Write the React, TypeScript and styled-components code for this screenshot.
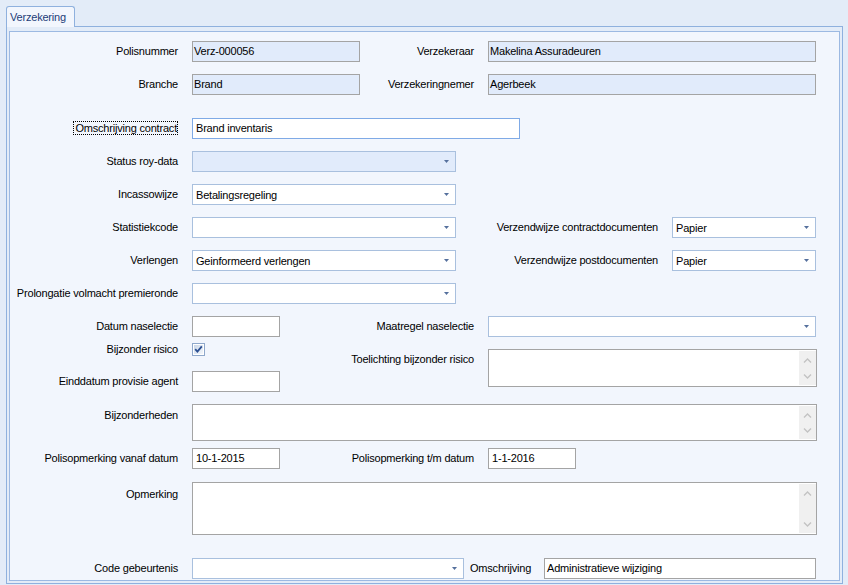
import React from "react";
import styled, { createGlobalStyle } from "styled-components";

const GlobalStyle = createGlobalStyle`
  html, body {
    margin: 0;
    padding: 0;
  }
  body {
    background: #e3ecf8;
    font-family: "Liberation Sans", Arial, sans-serif;
    font-size: 11px;
    letter-spacing: -0.2px;
    color: #000;
  }
`;

const Screen = styled.div`
  width: 848px;
  height: 585px;
  padding: 6px 0 0 6px;
  box-sizing: border-box;
  overflow: hidden;
`;

const TabStrip = styled.div`
  display: flex;
  position: relative;
  z-index: 1;
  margin-bottom: -1px;
`;

const Tab = styled.div`
  width: 69px;
  height: 21px;
  box-sizing: border-box;
  border: 1px solid #8fb1de;
  border-bottom: none;
  border-radius: 3px 3px 0 0;
  background: #f2f6fd;
  color: #1d3d78;
  padding: 3px 0 0 3px;
  line-height: 14px;
`;

const TabPanel = styled.div`
  width: 837px;
  box-sizing: border-box;
  border: 1px solid #8fb1de;
  background: #e3ecf8;
  padding: 4px 2px 2px 2px;
`;

const Group = styled.div`
  border: 1px solid #9cb9e2;
  background: #f2f6fd;
  padding: 9px 22px 1px 0;
  display: flex;
  flex-direction: column;
`;

const Row = styled.div<{ $top?: number; $gap?: number; $align?: string }>`
  display: flex;
  align-items: ${(p) => p.$align || "center"};
  gap: ${(p) => p.$gap ?? 12}px;
  margin-top: ${(p) => p.$top || 0}px;
`;

const Column = styled.div<{ $w?: number }>`
  display: flex;
  flex-direction: column;
  ${(p) => (p.$w ? `width: ${p.$w}px;` : "flex: 1;")}
`;

const Label = styled.div<{ $w: number; $left?: boolean; $pad?: number; $padR?: number }>`
  width: ${(p) => p.$w}px;
  flex: none;
  box-sizing: border-box;
  text-align: ${(p) => (p.$left ? "left" : "right")};
  padding-right: ${(p) => p.$padR ?? 2}px;
  padding-top: ${(p) => p.$pad || 0}px;
  white-space: nowrap;
  line-height: 13px;
`;

const FocusText = styled.span`
  border: 1px dotted #000;
  padding: 0 0 0 1px;
`;

const TextBox = styled.div<{ $w: number; $kind?: "readonly" | "plain" | "focus"; $pad?: number }>`
  width: ${(p) => p.$w}px;
  height: 21px;
  flex: none;
  box-sizing: border-box;
  border: 1px solid ${(p) => (p.$kind === "focus" ? "#7faae6" : "#a4a4a4")};
  background: ${(p) => (p.$kind === "readonly" ? "#e1ebfb" : "#fff")};
  padding-left: ${(p) => p.$pad ?? 2}px;
  line-height: 18px;
  white-space: nowrap;
  overflow: hidden;
`;

const ComboBox = styled.div<{ $w: number; $disabled?: boolean }>`
  width: ${(p) => p.$w}px;
  height: 21px;
  flex: none;
  box-sizing: border-box;
  border: 1px solid #a9c0de;
  background: ${(p) => (p.$disabled ? "#e1ebfb" : "#fff")};
  display: flex;
  align-items: center;
  padding: 0 6px 0 3px;
`;

const ComboValue = styled.span`
  flex: 1;
  white-space: nowrap;
  overflow: hidden;
`;

const Memo = styled.div<{ $h: number }>`
  flex: 1;
  height: ${(p) => p.$h}px;
  box-sizing: border-box;
  border: 1px solid #a4a4a4;
  background: #fff;
  display: flex;
  justify-content: flex-end;
  padding: 1px 0;
`;

const ScrollTrack = styled.div`
  width: 17px;
  background: #f0f0f0;
  display: flex;
  flex-direction: column;
  justify-content: space-between;
  align-items: center;
  padding: 7px 0 6px 0;
  box-sizing: border-box;
`;

const CheckWrap = styled.div`
  width: 13px;
  height: 13px;
  flex: none;
  display: flex;
`;

const Arrow = () => (
  <svg width="5" height="3" viewBox="0 0 5 3">
    <path d="M0 0H5L2.5 3Z" fill="#55709d" />
  </svg>
);

const Chevron = ({ up }: { up?: boolean }) => (
  <svg width="9" height="5" viewBox="0 0 9 5">
    <path
      d={up ? "M1 4.5L4.5 1L8 4.5" : "M1 0.5L4.5 4L8 0.5"}
      fill="none"
      stroke="#c3c3c3"
      strokeWidth="1.4"
    />
  </svg>
);

const Combo = ({ w, value, disabled }: { w: number; value?: string; disabled?: boolean }) => (
  <ComboBox $w={w} $disabled={disabled}>
    <ComboValue>{value}</ComboValue>
    <Arrow />
  </ComboBox>
);

const MemoBox = ({ h }: { h: number }) => (
  <Memo $h={h}>
    <ScrollTrack>
      <Chevron up />
      <Chevron />
    </ScrollTrack>
  </Memo>
);

const CheckBox = () => (
  <CheckWrap>
    <svg width="13" height="13" viewBox="0 0 13 13">
      <defs>
        <linearGradient id="cbg" x1="0" y1="0" x2="1" y2="1">
          <stop offset="0" stopColor="#c9d6e8" />
          <stop offset="1" stopColor="#f4f7fb" />
        </linearGradient>
      </defs>
      <rect x="0.5" y="0.5" width="12" height="12" fill="#fff" stroke="#8fa8cb" />
      <rect x="2" y="2" width="9" height="9" fill="url(#cbg)" />
      <path d="M3.2 6.2L5.4 8.6L9.8 3.4" fill="none" stroke="#2b4f91" strokeWidth="1.8" />
    </svg>
  </CheckWrap>
);

export default function App() {
  return (
    <Screen>
      <GlobalStyle />
      <TabStrip>
        <Tab>Verzekering</Tab>
      </TabStrip>
      <TabPanel>
        <Group>
          <Row>
            <Label $w={170}>Polisnummer</Label>
            <TextBox $w={168} $kind="readonly" $pad={1}>Verz-000056</TextBox>
            <Label $w={104}>Verzekeraar</Label>
            <TextBox $w={328} $kind="readonly" $pad={1}>Makelina Assuradeuren</TextBox>
          </Row>
          <Row $top={12}>
            <Label $w={170}>Branche</Label>
            <TextBox $w={168} $kind="readonly" $pad={1}>Brand</TextBox>
            <Label $w={104}>Verzekeringnemer</Label>
            <TextBox $w={328} $kind="readonly" $pad={1}>Agerbeek</TextBox>
          </Row>
          <Row $top={23}>
            <Label $w={170}>
              <FocusText>Omschrijving contract</FocusText>
            </Label>
            <TextBox $w={328} $kind="focus" $pad={3}>Brand inventaris</TextBox>
          </Row>
          <Row $top={12}>
            <Label $w={170}>Status roy-data</Label>
            <Combo w={264} disabled />
          </Row>
          <Row $top={12}>
            <Label $w={170}>Incassowijze</Label>
            <Combo w={264} value="Betalingsregeling" />
          </Row>
          <Row $top={12}>
            <Label $w={170}>Statistiekcode</Label>
            <Combo w={264} />
            <Label $w={192}>Verzendwijze contractdocumenten</Label>
            <Combo w={144} value="Papier" />
          </Row>
          <Row $top={12}>
            <Label $w={170}>Verlengen</Label>
            <Combo w={264} value="Geinformeerd verlengen" />
            <Label $w={192}>Verzendwijze postdocumenten</Label>
            <Combo w={144} value="Papier" />
          </Row>
          <Row $top={12}>
            <Label $w={170}>Prolongatie volmacht premieronde</Label>
            <Combo w={264} />
          </Row>
          <Row $top={12} $align="flex-start">
            <Column $w={270}>
              <Row>
                <Label $w={170}>Datum naselectie</Label>
                <TextBox $w={88} />
              </Row>
              <Row $top={6}>
                <Label $w={170}>Bijzonder risico</Label>
                <CheckBox />
              </Row>
              <Row $top={15}>
                <Label $w={170}>Einddatum provisie agent</Label>
                <TextBox $w={88} />
              </Row>
            </Column>
            <Column>
              <Row>
                <Label $w={184}>Maatregel naselectie</Label>
                <Combo w={328} />
              </Row>
              <Row $top={12} $align="flex-start">
                <Label $w={184} $pad={4}>Toelichting bijzonder risico</Label>
                <MemoBox h={38} />
              </Row>
            </Column>
          </Row>
          <Row $top={12} $align="flex-start">
            <Label $w={170} $pad={5}>Bijzonderheden</Label>
            <MemoBox h={37} />
          </Row>
          <Row $top={7}>
            <Label $w={170}>Polisopmerking vanaf datum</Label>
            <TextBox $w={88} $pad={3}>10-1-2015</TextBox>
            <Label $w={184}>Polisopmerking t/m datum</Label>
            <TextBox $w={88} $pad={3}>1-1-2016</TextBox>
          </Row>
          <Row $top={13} $align="flex-start">
            <Label $w={170} $pad={6}>Opmerking</Label>
            <MemoBox h={53} />
          </Row>
          <Row $top={23} $gap={6}>
            <Label $w={176} $padR={8}>Code gebeurtenis</Label>
            <Combo w={272} />
            <Label $w={68} $left>Omschrijving</Label>
            <TextBox $w={272} $pad={2}>Administratieve wijziging</TextBox>
          </Row>
        </Group>
      </TabPanel>
    </Screen>
  );
}
